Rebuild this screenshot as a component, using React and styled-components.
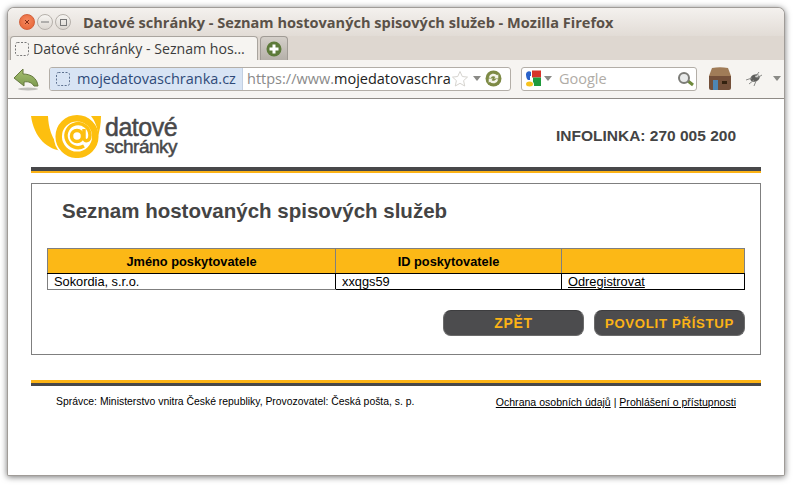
import React from 'react';
import styled, { createGlobalStyle } from 'styled-components';

const GlobalStyle = createGlobalStyle`
  html, body {
    margin: 0;
    padding: 0;
    background: #fff;
  }
  body {
    font-family: "Liberation Sans", Arial, sans-serif;
  }
`;

const Desktop = styled.div`
  width: 793px;
  height: 485px;
  box-sizing: border-box;
  padding: 8px 9px 10px 8px;
  overflow: hidden;
  background: #fff;
`;

const Window = styled.div`
  height: 467px;
  border-radius: 6px 6px 1px 1px;
  overflow: hidden;
  display: flex;
  flex-direction: column;
  background: #fff;
  box-shadow: 0 0 0 1px #a09c98, 0 1px 6px 1px rgba(0, 0, 0, 0.55);
`;

const TitleBar = styled.div`
  height: 28px;
  flex: none;
  display: flex;
  align-items: center;
  padding-left: 11px;
  background: linear-gradient(#f4f1ee, #e2dcd6);
`;

const WindowButtons = styled.div`
  display: flex;
  gap: 2px;
  margin-right: 12px;
`;

const WindowButton = styled.div`
  width: 16px;
  height: 16px;
  border-radius: 50%;
  display: flex;
  align-items: center;
  justify-content: center;
  box-sizing: border-box;
  border: 1px solid ${p => (p.$close ? '#d2603c' : '#b5b0aa')};
  background: ${p => (p.$close ? 'radial-gradient(circle at 50% 40%, #f58a62, #e5602f)' : 'linear-gradient(#f7f5f2, #dcd7d1)')};
`;

const WindowTitle = styled.div`
  font-family: "Open Sans", sans-serif;
  font-weight: 700;
  font-size: 14.55px;
  color: #5a5148;
  white-space: nowrap;
`;

const TabStrip = styled.div`
  height: 24px;
  flex: none;
  display: flex;
  align-items: flex-end;
  padding-left: 2px;
  gap: 2px;
  background: #ded7d0;
`;

const Tab = styled.div`
  width: 248px;
  height: 24px;
  box-sizing: border-box;
  display: flex;
  align-items: center;
  gap: 4px;
  padding-left: 4px;
  border: 1px solid #a9a49e;
  border-bottom: none;
  border-radius: 4px 4px 0 0;
  background: #f6f4f1;
  font-family: "Open Sans", sans-serif;
  font-size: 14.15px;
  color: #3c3c3c;
  white-space: nowrap;
`;

const NewTab = styled.div`
  width: 28px;
  height: 24px;
  box-sizing: border-box;
  display: flex;
  align-items: center;
  justify-content: center;
  border: 1px solid #a09b95;
  border-bottom: none;
  border-radius: 4px 4px 0 0;
  background: linear-gradient(#d4cfc9, #b5b0a9);
`;

const Toolbar = styled.div`
  height: 39px;
  flex: none;
  box-sizing: border-box;
  display: flex;
  align-items: center;
  padding: 0 0 1px 5px;
  background: #f6f4f1;
  border-bottom: 1px solid #8f8b86;
`;

const BackIcon = styled.svg`
  width: 26px;
  height: 24px;
  margin-right: 10px;
`;

const UrlBar = styled.div`
  width: 462px;
  height: 24px;
  box-sizing: border-box;
  display: flex;
  align-items: center;
  border: 1px solid #b3aea7;
  border-radius: 3px;
  background: #fff;
  overflow: hidden;
  font-family: "Open Sans", sans-serif;
  font-size: 14.5px;
`;

const SiteBadge = styled.div`
  width: 193px;
  height: 100%;
  flex: none;
  display: flex;
  align-items: center;
  gap: 7px;
  padding-left: 6px;
  box-sizing: border-box;
  background: #d8e4f4;
  border-right: 1px solid #c3d0e2;
  color: #2f4a78;
  white-space: nowrap;
`;

const UrlText = styled.div`
  width: 208px;
  flex: none;
  padding-left: 4px;
  box-sizing: border-box;
  color: #222;
  white-space: nowrap;
`;

const UrlScheme = styled.span`
  color: #8a8a8a;
`;

const UrlActions = styled.div`
  display: flex;
  align-items: center;
  gap: 4px;
`;

const SearchBox = styled.div`
  width: 176px;
  height: 24px;
  box-sizing: border-box;
  margin-left: 10px;
  display: flex;
  align-items: center;
  padding: 0 1px 0 3px;
  border: 1px solid #b3aea7;
  border-radius: 3px;
  background: #fff;
`;

const EngineIcon = styled.svg`
  margin-right: 3px;
`;

const SearchPlaceholder = styled.div`
  flex: 1;
  margin-left: 7px;
  font-family: "Open Sans", sans-serif;
  font-size: 14.5px;
  color: #b0aca6;
`;

const HouseIcon = styled.svg`
  margin-left: 11px;
`;

const BugIcon = styled.svg`
  margin: 0 10px 0 13px;
`;

const Page = styled.div`
  flex: 1;
  padding: 15px 23px 0;
  background: #fff;
`;

const Header = styled.div`
  height: 53px;
  display: flex;
  justify-content: space-between;
  align-items: flex-start;
  padding-right: 25px;
`;

const Logo = styled.div`
  display: flex;
  align-items: flex-start;
`;

const LogoWords = styled.div`
  display: flex;
  flex-direction: column;
  margin: 1px 0 0 2px;
  color: #48484a;
  letter-spacing: -0.5px;
`;

const LogoTop = styled.span`
  font-size: 25px;
  line-height: 24px;
  -webkit-text-stroke: 0.5px #48484a;
`;

const LogoBottom = styled.span`
  font-size: 19px;
  line-height: 16px;
  -webkit-text-stroke: 0.5px #48484a;
`;

const Infoline = styled.div`
  margin-top: 13px;
  font-size: 15.5px;
  line-height: 17px;
  font-weight: 700;
  color: #444;
`;

const Rule = styled.div`
  height: 6px;
  background: ${p => (p.$flip
    ? 'linear-gradient(#fcb316 0 3px, #48484a 3px)'
    : 'linear-gradient(#48484a 0 4px, #fcb316 4px)')};
`;

const Panel = styled.div`
  margin-top: 10px;
  height: 172px;
  box-sizing: border-box;
  border: 1px solid #7f7f7f;
  padding: 0 15px;
`;

const Heading = styled.h1`
  margin: 0;
  padding: 14px 0 0 15px;
  height: 64px;
  box-sizing: border-box;
  font-size: 20.5px;
  line-height: 25px;
  font-weight: 700;
  color: #444;
`;

const Table = styled.table`
  width: 697px;
  table-layout: fixed;
  border-collapse: collapse;
  font-size: 12.8px;
  color: #000;
`;

const Column = styled.col`
  width: ${p => p.$width}px;
`;

const HeadCell = styled.th`
  height: 24px;
  padding: 0;
  background: #fcb816;
  border: 1px solid #7f7f7f;
  border-bottom-color: #000;
  font-size: 12.8px;
  text-align: center;
`;

const Cell = styled.td`
  height: 15px;
  padding: 0 6px;
  border: 1px solid #000;
  border-left-color: ${p => (p.$first ? '#7f7f7f' : '#000')};
  border-bottom-color: ${p => (p.$first ? '#7f7f7f' : '#000')};
  line-height: 15px;
`;

const PlainLink = styled.a`
  color: #000;
  text-decoration: underline;
`;

const Actions = styled.div`
  display: flex;
  justify-content: flex-end;
  gap: 10px;
  margin-top: 20px;
`;

const Button = styled.div`
  width: ${p => p.$width}px;
  height: 26px;
  box-sizing: border-box;
  display: flex;
  align-items: center;
  justify-content: center;
  border-radius: 8px;
  border: 1px solid #6b6b6b;
  border-top-color: #3d3d3f;
  background: #4c4c4e;
  color: #fcb316;
  font-weight: 700;
  font-size: ${p => p.$size}px;
  letter-spacing: 0.7px;
  white-space: nowrap;
`;

const FooterRule = styled(Rule)`
  margin-top: 25px;
`;

const Footer = styled.div`
  display: flex;
  justify-content: space-between;
  padding: 9px 25px 0;
  font-size: 10.4px;
  line-height: 14px;
  color: #000;
`;

const FooterLinks = styled.span`
  font-size: 10.55px;
`;

const Favicon = ({ color = '#777' }) => (
  <svg width="14" height="14" viewBox="0 0 14 14">
    <rect x="0.5" y="0.5" width="13" height="13" rx="2" fill="none" stroke={color} strokeDasharray="2 1.5" />
  </svg>
);

const Caret = ({ color = '#8a8a86' }) => (
  <svg width="8" height="5" viewBox="0 0 8 5">
    <path d="M0 0h8L4 5z" fill={color} />
  </svg>
);

export default function App() {
  return (
    <Desktop>
      <GlobalStyle />
      <Window>
        <TitleBar>
          <WindowButtons>
            <WindowButton $close>
              <svg width="6" height="6" viewBox="0 0 6 6">
                <path d="M1 1l4 4M5 1L1 5" stroke="#7d2a14" strokeWidth="1" />
              </svg>
            </WindowButton>
            <WindowButton>
              <svg width="8" height="6" viewBox="0 0 8 6">
                <path d="M0 3h8" stroke="#777" strokeWidth="1" />
              </svg>
            </WindowButton>
            <WindowButton>
              <svg width="7" height="7" viewBox="0 0 7 7">
                <rect x="0.5" y="0.5" width="6" height="6" fill="none" stroke="#777" />
              </svg>
            </WindowButton>
          </WindowButtons>
          <WindowTitle>Datové schránky - Seznam hostovaných spisových služeb - Mozilla Firefox</WindowTitle>
        </TitleBar>

        <TabStrip>
          <Tab>
            <Favicon />
            Datové schránky - Seznam hos…
          </Tab>
          <NewTab>
            <svg width="16" height="16" viewBox="0 0 16 16">
              <circle cx="8" cy="8" r="7.5" fill="#5d7a3a" />
              <path d="M8 3.5v9M3.5 8h9" stroke="#fff" strokeWidth="3" />
            </svg>
          </NewTab>
        </TabStrip>

        <Toolbar>
          <BackIcon viewBox="0 0 26 24">
            <defs>
              <linearGradient id="backFill" x1="0" y1="0" x2="0" y2="1">
                <stop offset="0" stopColor="#a6c070" />
                <stop offset="1" stopColor="#7f9c52" />
              </linearGradient>
            </defs>
            <ellipse cx="15" cy="22" rx="10" ry="1.5" fill="#9a9a94" opacity="0.6" />
            <path d="M1 11L10 2v5c8 0 14 4 15 12h-4c-2-3-5-5-10-4v4z" fill="url(#backFill)" stroke="#66793f" strokeWidth="1" strokeLinejoin="round" />
          </BackIcon>
          <UrlBar>
            <SiteBadge>
              <Favicon color="#5e7290" />
              mojedatovaschranka.cz
            </SiteBadge>
            <UrlText>
              <UrlScheme>https://www.</UrlScheme>mojedatovaschra
            </UrlText>
            <UrlActions>
              <svg width="18" height="18" viewBox="0 0 18 18">
                <path d="M9 1.5l2.3 5 5.2.6-3.9 3.500 1.100 5.400L9 13.300 4.300 16l1.100-5.400L1.500 7.100l5.200-.6z" fill="#fff" stroke="#d6d4cf" />
              </svg>
              <Caret />
              <svg width="17" height="17" viewBox="0 0 16 16">
                <circle cx="8" cy="8" r="7.500" fill="#7d8a45" />
                <path d="M3.500 7a4.700 4.700 0 0 1 8-2l1-1v4H8.500l1.300-1.300A2.600 2.600 0 0 0 5.500 7.500zM12.500 9a4.700 4.700 0 0 1-8 2l-1 1V8h4L6.200 9.300a2.600 2.600 0 0 0 4.300-.8z" fill="#f4f4ea" />
              </svg>
            </UrlActions>
          </UrlBar>

          <SearchBox>
            <EngineIcon width="16" height="18" viewBox="0 0 16 18">
              <path d="M1 4a3 3 0 0 1 5-2v4H5v4H3C1.500 9 1 6.500 1 4z" fill="#2a62c9" />
              <rect x="7" y="0.500" width="9" height="7" fill="#d8322a" />
              <path d="M8 7.500h8V16H9c0-2 0-3-1-4z" fill="#1f9a3c" />
              <ellipse cx="4.500" cy="14" rx="3.500" ry="2.500" fill="#f7c21c" />
            </EngineIcon>
            <Caret />
            <SearchPlaceholder>Google</SearchPlaceholder>
            <svg width="18" height="16" viewBox="0 0 18 16">
              <path d="M11 10l5 4" stroke="#6f8a3c" strokeWidth="3" />
              <circle cx="7" cy="7" r="5" fill="#e8eaea" stroke="#7c7c78" strokeWidth="2" />
            </svg>
          </SearchBox>

          <HouseIcon width="24" height="24" viewBox="0 0 24 24">
            <path d="M4 1q8-1.500 16 0l3 8q0 1-1 1H2q-1 0-1-1z" fill="#a07c58" />
            <path d="M1 9h22v12q0 2-2 2H3q-2 0-2-2z" fill="#74503a" />
            <rect x="5" y="13" width="5" height="10" fill="#4e86b4" />
            <rect x="14" y="14" width="5" height="3" fill="#33210f" />
          </HouseIcon>
          <BugIcon width="18" height="16" viewBox="0 0 18 16">
            <ellipse cx="10" cy="7" rx="5" ry="3.500" fill="#5e5e5c" transform="rotate(-25 10 7)" />
            <ellipse cx="12" cy="5" rx="2" ry="1.200" fill="#cfcfcc" transform="rotate(-25 12 5)" />
            <path d="M1 9l6-2M4 13l5-4M9 15l2-5M14 1l-3 4M17 4l-5 3" stroke="#8a8a88" strokeWidth="1" />
          </BugIcon>
          <Caret />
        </Toolbar>

        <Page>
          <Header>
            <Logo>
              <svg width="72" height="44" viewBox="3 2 72 44">
                <path d="M3 4H20C20.500 14 22.500 27 35 39 20 38 6 26 3 4z" fill="#fdbf0f" />
                <circle cx="49" cy="24.500" r="23.200" fill="#fff" />
                <circle cx="49" cy="24.500" r="18.300" fill="none" stroke="#fdbf0f" strokeWidth="6.500" />
                <path d="M63 4h10C73 20 68 35 57 44 63 38 70 30 70 24 70 16 67 9 63 4z" fill="#fdbf0f" />
                <circle cx="49" cy="24" r="5.500" fill="none" stroke="#fdbf0f" strokeWidth="3.500" />
                <path d="M56 17v9c0 4 6 4 6-3a12 12 0 1 0-6 11" fill="none" stroke="#fdbf0f" strokeWidth="3.500" />
              </svg>
              <LogoWords>
                <LogoTop>datové</LogoTop>
                <LogoBottom>schránky</LogoBottom>
              </LogoWords>
            </Logo>
            <Infoline>INFOLINKA: 270 005 200</Infoline>
          </Header>
          <Rule />

          <Panel>
            <Heading>Seznam hostovaných spisových služeb</Heading>
            <Table>
              <colgroup>
                <Column $width={288} />
                <Column $width={226} />
                <Column $width={183} />
              </colgroup>
              <thead>
                <tr>
                  <HeadCell>Jméno poskytovatele</HeadCell>
                  <HeadCell>ID poskytovatele</HeadCell>
                  <HeadCell />
                </tr>
              </thead>
              <tbody>
                <tr>
                  <Cell $first>Sokordia, s.r.o.</Cell>
                  <Cell>xxqgs59</Cell>
                  <Cell><PlainLink href="#">Odregistrovat</PlainLink></Cell>
                </tr>
              </tbody>
            </Table>
            <Actions>
              <Button $width={141} $size={14}>ZPĚT</Button>
              <Button $width={151} $size={13.2}>POVOLIT PŘÍSTUP</Button>
            </Actions>
          </Panel>

          <FooterRule $flip />
          <Footer>
            <span>Správce: Ministerstvo vnitra České republiky, Provozovatel: Česká pošta, s. p.</span>
            <FooterLinks>
              <PlainLink href="#">Ochrana osobních údajů</PlainLink> | <PlainLink href="#">Prohlášení o přístupnosti</PlainLink>
            </FooterLinks>
          </Footer>
        </Page>
      </Window>
    </Desktop>
  );
}
